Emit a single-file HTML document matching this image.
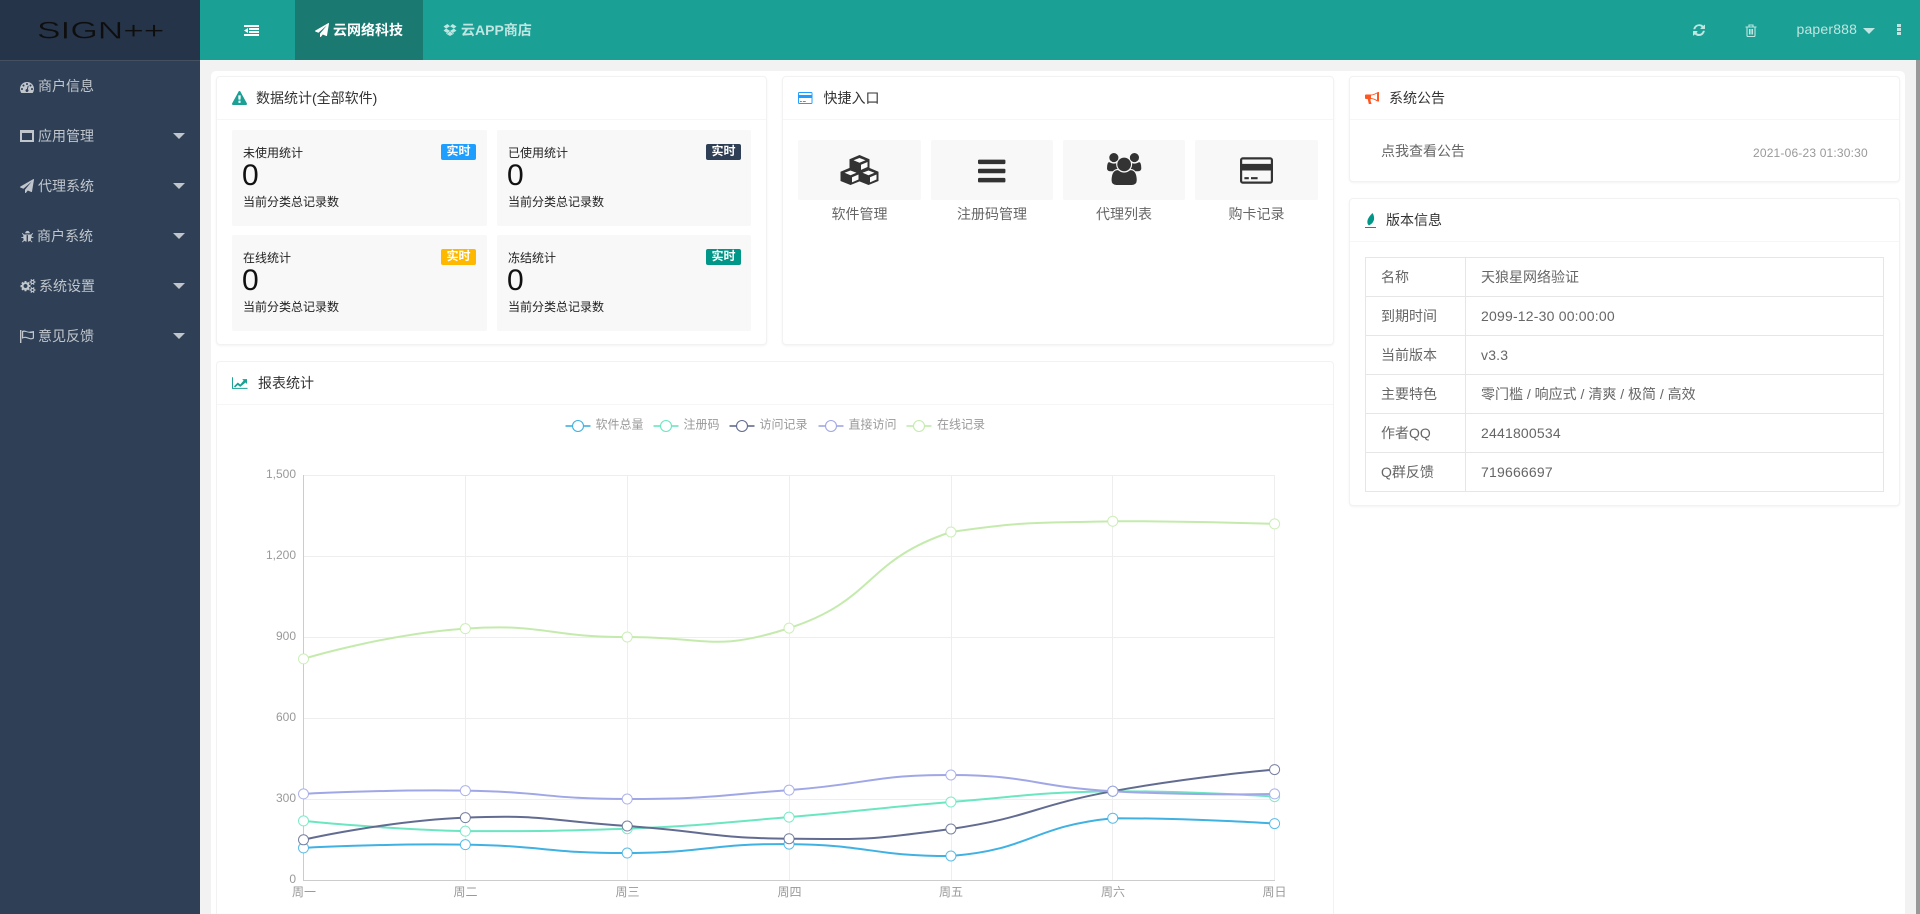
<!DOCTYPE html>
<html lang="zh-CN">
<head>
<meta charset="utf-8">
<title>SIGN++</title>
<style>
*{box-sizing:border-box;margin:0;padding:0}
html,body{width:1920px;height:914px;overflow:hidden;background:#fff;font-family:"Liberation Sans","Noto Sans CJK SC",sans-serif;font-size:14px;color:#666}
#root{position:relative;width:1920px;height:914px;overflow:hidden}
.a{position:absolute}
.t{position:absolute;white-space:nowrap;line-height:20px;height:20px}
svg.i{position:absolute;display:block;overflow:visible}
#side{left:0;top:0;width:200px;height:914px;background:#2f4056}
#logo{left:0;top:0;width:200px;height:61px;background:#263449;border-bottom:1px solid #455160}
#head{left:200px;top:0;width:1720px;height:60px;background:#1aa094}
#tab{left:295px;top:0;width:128px;height:60px;background:#1a7a72}
#bg{left:200px;top:60px;width:1716px;height:854px;background:#f2f2f2}
#wrap{left:211px;top:71px;width:1694px;height:843px;background:#fff;border-radius:5px 5px 0 0}
#sb{left:1916px;top:60px;width:4px;height:854px;background:#999}
.card{position:absolute;background:#fff;border:1px solid #f2f2f2;border-radius:4px;box-shadow:0 1px 2px rgba(0,0,0,.05)}
.hr{position:absolute;height:1px;background:#f6f6f6}
.side{color:#c1c6cd;font-size:14px}
.ttl{color:#333;font-size:14px}
.arr{position:absolute;width:0;height:0;border-left:6px solid transparent;border-right:6px solid transparent;border-top:6px solid #c1c6cd}
.box{position:absolute;background:#f8f8f8;border-radius:2px}
.s1{font-size:12px;color:#222}
.zero{position:absolute;font-size:30px;line-height:34px;color:#111;font-family:"Liberation Sans",sans-serif}
.badge{position:absolute;width:35px;height:16px;border-radius:2px;color:#fff;font-size:12px;font-weight:bold;line-height:15px;text-align:center}
.ql{position:absolute;text-align:center;color:#666;font-size:14px;line-height:20px;white-space:nowrap}
table{position:absolute;left:1365px;top:257px;width:519px;border-collapse:collapse;table-layout:fixed;color:#666;font-size:14px}
td{border:1px solid #e6e6e6;height:39px;padding:0 15px;line-height:20px;white-space:nowrap}
td.n{letter-spacing:.2px}
svg text{font-family:"Liberation Sans","Noto Sans CJK SC",sans-serif}
</style>
</head>
<body>
<div id="root">
<div class="a" id="bg"></div>
<div class="a" id="wrap"></div>
<div class="a" id="sb"></div>
<div class="a" id="head"></div>
<div class="a" id="tab"></div>

<!-- header icons -->
<svg class="i" style="left:244px;top:25px;width:15px;height:11px" viewBox="0 0 15 11" fill="#fff"><rect x="0" y="0" width="15" height="2"/><rect x="5" y="3" width="10" height="2"/><rect x="5" y="6" width="10" height="2"/><rect x="0" y="9" width="15" height="2"/><path d="M0 5.500L4 3v5z"/></svg>
<svg class="i" style="left:315px;top:23px;width:14px;height:14px" viewBox="0 0 1792 1792" fill="#fff"><path d="M1764 11q33 24 27 64l-256 1536q-5 29-32 45-14 8-31 8-11 0-24-5l-453-185-242 295q-18 23-49 23-13 0-22-4-19-7-30.5-23.5t-11.5-36.5v-349l864-1059-1069 925-395-162q-37-14-40-55-2-40 32-59l1664-960q15-9 32-9 20 0 36 11z"/></svg>
<div class="t" style="left:333px;top:20px;color:#fff;font-weight:bold">云网络科技</div>
<svg class="i" style="left:443px;top:23px;width:14px;height:14px" viewBox="0 0 1792 1792" fill="#bfe6e2"><path d="M402 707l494 305-342 285L64 978zM1390 1262v108l-494 295-494-295v-108l152 99 342-284 342 284zM554 128l342 285-494 305L64 446zM1238 128l490 318-338 272-494-305zM1390 718l338 260-490 319-342-285z"/></svg>
<div class="t" style="left:461px;top:20px;color:#bfe6e2;font-weight:bold">云APP商店</div>

<svg class="i" style="left:1692px;top:23px;width:14px;height:14px" viewBox="0 0 1792 1792" fill="#bfe6e2"><path d="M1639 1056q0 5-1 7-64 268-268 434.5T892 1664q-146 0-282.5-55T366 1452l-129 129q-19 19-45 19t-45-19-19-45v-448q0-26 19-45t45-19h448q26 0 45 19t19 45-19 45L592 1274q62 58 143 91t174 33q122 0 228-58.5T1319 1168q16-26 64-144 9-26 33-26h192q13 0 22.5 9.5t9.5 22.5zM1664 256v448q0 26-19 45t-45 19h-448q-26 0-45-19t-19-45 19-45l138-138q-148-137-349-137-122 0-228 58T497 624q-16 26-64 144-9 26-33 26H201q-13 0-22.5-9.5T169 762v-7q65-268 270-434.5T920 154q146 0 284 55.5T1450 366l130-129q19-19 45-19t45 19 19 45z"/></svg>
<svg class="i" style="left:1745px;top:24px;width:12px;height:13px" viewBox="0 0 12 13" fill="none" stroke="#bfe6e2" stroke-width="1.1"><path d="M.5 3h11M4 3V1h4v2M2 3v8.500q0 1 1 1h6q1 0 1-1V3M4.500 5v5.500M6 5v5.500M7.500 5v5.500"/></svg>
<div class="t" style="left:1796.5px;top:19px;color:#bfe6e2;letter-spacing:.18px">paper888</div>
<div class="a" style="left:1862.5px;top:27.5px;width:0;height:0;border-left:6px solid transparent;border-right:6px solid transparent;border-top:6px solid #bfe6e2"></div>
<svg class="i" style="left:1897px;top:24px;width:4px;height:11px" viewBox="0 0 4 11" fill="#bfe6e2"><rect width="4" height="3"/><rect y="4" width="4" height="3"/><rect y="8" width="4" height="3"/></svg>

<!-- sidebar -->
<div class="a" id="side"></div>
<div class="a" id="logo"></div>
<svg class="i" style="left:0;top:0;width:200px;height:60px" viewBox="0 0 200 60"><text transform="translate(37,38.6) scale(1.47,1)" font-size="24" fill="#0e0e0e" stroke="#263449" stroke-width=".35">SIGN++</text></svg>

<svg class="i" style="left:20px;top:79.5px;width:14px;height:14px" viewBox="0 0 1792 1792" fill="#c1c6cd"><path d="M384 1152q0-53-37.5-90.5T256 1024t-90.5 37.5T128 1152t37.5 90.5T256 1280t90.5-37.5T384 1152zm192-448q0-53-37.5-90.5T448 576t-90.5 37.5T320 704t37.5 90.5T448 832t90.5-37.5T576 704zm428 481l101-382q6-26-7.5-48.5T1059 724t-48 6.5-30 39.5l-101 382q-60 5-107 43.5t-63 98.5q-20 77 20 146t117 89 146-20 89-117q16-60-6-117t-72-91zm660-33q0-53-37.5-90.5T1536 1024t-90.5 37.5-37.5 90.5 37.5 90.5 90.5 37.5 90.5-37.5 37.5-90.5zm-640-640q0-53-37.5-90.5T896 384t-90.5 37.5T768 512t37.5 90.5T896 640t90.5-37.5T1024 512zm448 192q0-53-37.5-90.5T1344 576t-90.5 37.5T1216 704t37.5 90.5 90.5 37.5 90.5-37.5T1472 704zm320 448q0 261-141 483-19 29-54 29H195q-35 0-54-29Q0 1414 0 1152q0-182 71-348t191-286 286-191 348-71 348 71 286 191 191 286 71 348z"/></svg>
<div class="t side" style="left:38px;top:76px">商户信息</div>

<svg class="i" style="left:20px;top:130px;width:14px;height:12px" viewBox="0 0 14 12" fill="#c1c6cd"><path fill-rule="evenodd" d="M0 0h14v12H0zM2 3v7h10V3z"/></svg>
<div class="t side" style="left:38px;top:126px">应用管理</div>
<div class="arr" style="left:173px;top:133px"></div>

<svg class="i" style="left:20px;top:178.5px;width:14px;height:14px" viewBox="0 0 1792 1792" fill="#c1c6cd"><path d="M1764 11q33 24 27 64l-256 1536q-5 29-32 45-14 8-31 8-11 0-24-5l-453-185-242 295q-18 23-49 23-13 0-22-4-19-7-30.5-23.5t-11.5-36.5v-349l864-1059-1069 925-395-162q-37-14-40-55-2-40 32-59l1664-960q15-9 32-9 20 0 36 11z"/></svg>
<div class="t side" style="left:38px;top:176px">代理系统</div>
<div class="arr" style="left:173px;top:183px"></div>

<svg class="i" style="left:20.5px;top:229.5px;width:13px;height:13px" viewBox="0 0 1792 1792" fill="#c1c6cd"><path d="M1696 1024q0 26-19 45t-45 19h-224q0 171-67 290l208 209q19 19 19 45t-19 45q-18 19-45 19t-45-19l-198-197q-5 5-15 13t-42 28.5-65 36.5-82 29-97 13V704H768v896q-51 0-101.5-13.5t-87-33-66-39T469 1482l-16-15-183 207q-20 21-48 21-24 0-43-16-19-18-20.5-44.5T174 1588l202-227q-58-114-58-274H94q-26 0-45-19t-19-45 19-45 45-19h224V710L145 537q-19-19-19-45t19-45 45-19 45 19l173 173h976l173-173q19-19 45-19t45 19 19 45-19 45l-173 173v249h224q26 0 45 19t19 45zM1216 448H576q0-133 93.5-226.5T896 128t226.5 93.5T1216 448z"/></svg>
<div class="t side" style="left:37px;top:226px">商户系统</div>
<div class="arr" style="left:173px;top:233px"></div>

<svg class="i" style="left:19.5px;top:278.500px;width:16px;height:14px" viewBox="0 0 2048 1792" fill="#c1c6cd"><path d="M960 896q0-106-75-181t-181-75-181 75-75 181 75 181 181 75 181-75 75-181zm768 512q0-52-38-90t-90-38-90 38-38 90q0 53 37.5 90.5T1600 1536t90.5-37.5 37.5-90.5zm0-1024q0-52-38-90t-90-38-90 38-38 90q0 53 37.5 90.5T1600 512t90.5-37.5T1728 384zm-384 421v185q0 10-7 19.5t-16 10.5l-155 24q-11 35-32 76 34 48 90 115 7 11 7 20 0 12-7 19-23 30-82.5 89.5T1063 1458q-11 0-21-7l-115-90q-37 19-77 31-11 108-23 155-7 24-30 24H611q-11 0-20-7.5T581 1546l-23-153q-34-10-75-31l-118 89q-7 7-20 7-11 0-21-8-144-133-144-160 0-9 7-19 10-14 41-53t47-61q-23-44-35-82l-152-24q-10-1-17-9.5T64 993V808q0-10 7-19.5t16-10.5l155-24q11-35 32-76-34-48-90-115-7-11-7-20 0-12 7-20 22-30 82-89t79-59q11 0 21 7l115 90q34-18 77-32 11-108 23-154 7-24 30-24h186q11 0 20 7.5t10 17.5l23 153q34 10 75 31l118-89q8-7 20-7 11 0 21 8 144 133 144 160 0 8-7 19-12 16-42 54t-45 60q23 48 34 82l152 23q10 2 17 10.5t7 19.5zm640 533v140q0 16-149 31-12 27-30 52 51 113 51 138 0 4-4 7-122 71-124 71-8 0-46-47t-52-68q-20 2-30 2t-30-2q-14 21-52 68t-46 47q-2 0-124-71-4-3-4-7 0-25 51-138-18-25-30-52-149-15-149-31v-140q0-16 149-31 13-29 30-52-51-113-51-138 0-4 4-7 4-2 35-20t59-34 30-16q8 0 46 46.5t52 67.5q20-2 30-2t30 2q51-71 92-112l6-2q4 0 124 70 4 3 4 7 0 25-51 138 17 23 30 52 149 15 149 31zm0-1024v140q0 16-149 31-12 27-30 52 51 113 51 138 0 4-4 7-122 71-124 71-8 0-46-47t-52-68q-20 2-30 2t-30-2q-14 21-52 68t-46 47q-2 0-124-71-4-3-4-7 0-25 51-138-18-25-30-52-149-15-149-31V314q0-16 149-31 13-29 30-52-51-113-51-138 0-4 4-7 4-2 35-20t59-34 30-16q8 0 46 46.5t52 67.5q20-2 30-2t30 2q51-71 92-112l6-2q4 0 124 70 4 3 4 7 0 25-51 138 17 23 30 52 149 15 149 31z"/></svg>
<div class="t side" style="left:39px;top:276px">系统设置</div>
<div class="arr" style="left:173px;top:283px"></div>

<svg class="i" style="left:20px;top:330px;width:14px;height:13px" viewBox="0 0 14 13" fill="#c1c6cd"><path d="M0 0h1.400v13H0z"/><path fill-rule="evenodd" d="M2 1q2-1 4 0t4 .6L14 1v7.400q-2 1.400-4 .8T6 8q-2-.4-4 .8zM3.200 2v5.200q1.600-.6 3-.3t4 1.200q1.300.3 2.600-.3V2.800q-1.500.4-3 .1T6 2q-1.500-.4-2.800 0z"/></svg>
<div class="t side" style="left:38px;top:326px">意见反馈</div>
<div class="arr" style="left:173px;top:333px"></div>

<!-- card 1 -->
<div class="card" style="left:216px;top:76px;width:551px;height:269px"></div>
<div class="hr" style="left:217px;top:119px;width:549px"></div>
<svg class="i" style="left:232px;top:91px;width:15px;height:14px" viewBox="0 0 1792 1664" fill="#1aa094"><path d="M1024 1375v-190q0-14-9.500-23.500T992 1152H800q-13 0-22.500 9.500T768 1185v190q0 14 9.500 23.500t22.500 9.500h192q13 0 22.500-9.500t9.500-23.500zm-2-374l18-459q0-12-10-19-13-11-24-11H786q-11 0-24 11-10 7-10 21l17 457q0 10 10 16.500t24 6.500h185q14 0 23.500-6.500t10.500-16.500zm-14-934l768 1408q35 63-2 126-17 29-46.500 46t-63.500 17H128q-34 0-63.500-17T18 1601q-37-63-2-126L784 67q17-31 47-49t65-18 65 18 47 49z"/></svg>
<div class="t ttl" style="left:256px;top:88px">数据统计(全部软件)</div>

<div class="box" style="left:232px;top:130px;width:255px;height:96px"></div>
<div class="t s1" style="left:243px;top:142.500px">未使用统计</div>
<div class="zero" style="left:242px;top:159px">0</div>
<div class="t s1" style="left:243px;top:191.500px">当前分类总记录数</div>
<div class="badge" style="left:441px;top:144px;background:#1e9fff">实时</div>

<div class="box" style="left:497px;top:130px;width:254px;height:96px"></div>
<div class="t s1" style="left:508px;top:142.500px">已使用统计</div>
<div class="zero" style="left:507px;top:159px">0</div>
<div class="t s1" style="left:508px;top:191.500px">当前分类总记录数</div>
<div class="badge" style="left:706px;top:144px;background:#2f4056">实时</div>

<div class="box" style="left:232px;top:235px;width:255px;height:96px"></div>
<div class="t s1" style="left:243px;top:247.500px">在线统计</div>
<div class="zero" style="left:242px;top:264px">0</div>
<div class="t s1" style="left:243px;top:296.500px">当前分类总记录数</div>
<div class="badge" style="left:441px;top:249px;background:#ffb800">实时</div>

<div class="box" style="left:497px;top:235px;width:254px;height:96px"></div>
<div class="t s1" style="left:508px;top:247.500px">冻结统计</div>
<div class="zero" style="left:507px;top:264px">0</div>
<div class="t s1" style="left:508px;top:296.500px">当前分类总记录数</div>
<div class="badge" style="left:706px;top:249px;background:#009688">实时</div>

<!-- card 2 -->
<div class="card" style="left:782px;top:76px;width:552px;height:269px"></div>
<div class="hr" style="left:783px;top:119px;width:550px"></div>
<svg class="i" style="left:798px;top:92px;width:14.500px;height:12px" viewBox="0 0 1920 1536" preserveAspectRatio="none" fill="#1e9fff"><path d="M1760 0q66 0 113 47t47 113v1216q0 66-47 113t-113 47H160q-66 0-113-47T0 1376V160q0-66 47-113T160 0h1600zM128 128v256h1664V128H128zM1792 768H128v640h1664V768zM256 1280v-128h256v128H256zm384 0v-128h384v128H640z"/></svg>
<div class="t ttl" style="left:823.500px;top:88px">快捷入口</div>

<div class="box" style="left:798px;top:140px;width:123px;height:60px"></div>
<div class="box" style="left:931px;top:140px;width:122px;height:60px"></div>
<div class="box" style="left:1063px;top:140px;width:122px;height:60px"></div>
<div class="box" style="left:1195px;top:140px;width:123px;height:60px"></div>

<svg class="i" style="left:840.500px;top:155px;width:37px;height:30px" viewBox="0 0 37 30">
<g><path fill="#333" d="M18.500 0L28.500 4.200V13.500L18.500 17.500L8.500 13.500V4.200Z"/><path fill="#fbfbfb" d="M18.500 3L24.500 5.300L18.500 7.700L12.500 5.300ZM20 9.800L26.500 7V12L20 14.900Z"/></g>
<g transform="translate(-9 12.500)"><path fill="#333" d="M18.500 0L28.500 4.200V13.500L18.500 17.500L8.500 13.500V4.200Z"/><path fill="#fbfbfb" d="M18.500 3L24.500 5.300L18.500 7.700L12.500 5.300ZM20 9.800L26.500 7V12L20 14.900Z"/></g>
<g transform="translate(9 12.500)"><path fill="#333" d="M18.500 0L28.500 4.200V13.500L18.500 17.500L8.500 13.500V4.200Z"/><path fill="#fbfbfb" d="M18.500 3L24.500 5.300L18.500 7.700L12.500 5.300ZM20 9.800L26.500 7V12L20 14.900Z"/></g>
</svg>
<svg class="i" style="left:978.300px;top:154.700px;width:27.430px;height:32px" viewBox="0 0 1536 1792" fill="#333"><path d="M1536 1344v128q0 26-19 45t-45 19H64q-26 0-45-19t-19-45v-128q0-26 19-45t45-19h1408q26 0 45 19t19 45zm0-512v128q0 26-19 45t-45 19H64q-26 0-45-19t-19-45V832q0-26 19-45t45-19h1408q26 0 45 19t19 45zm0-512v128q0 26-19 45t-45 19H64q-26 0-45-19t-19-45V320q0-26 19-45t45-19h1408q26 0 45 19t19 45z"/></svg>
<svg class="i" style="left:1107px;top:153px;width:34.300px;height:32px" viewBox="0 0 1920 1792" fill="#333"><path d="M593 896q-162 5-265 128h-134q-82 0-138-40.500t-56-118.500q0-353 124-353 6 0 43.500 21t97.500 42.500 119 21.500q67 0 133-23-5 37-5 66 0 139 81 256zm1071 637q0 120-73 189.500t-194 69.500h-874q-121 0-194-69.500t-73-189.500q0-53 3.500-103.500t14-109 26.500-108.500 43-97.500 62-81 85.500-53.500 111.500-20q10 0 43 21.500t73 48 107 48 135 21.500 135-21.500 107-48 73-48 43-21.500q61 0 111.500 20t85.500 53.500 62 81 43 97.500 26.500 108.500 14 109 3.500 103.500zm-1024-1277q0 106-75 181t-181 75-181-75-75-181 75-181 181-75 181 75 75 181zm704 384q0 159-112.500 271.500t-271.500 112.500-271.500-112.500-112.500-271.500 112.500-271.500 271.500-112.500 271.500 112.500 112.500 271.500zm576 225q0 78-56 118.500t-138 40.500h-134q-103-123-265-128 81-117 81-256 0-29-5-66 66 23 133 23 59 0 119-21.500t97.500-42.500 43.500-21q124 0 124 353zm-128-609q0 106-75 181t-181 75-181-75-75-181 75-181 181-75 181 75 75 181z"/></svg>
<svg class="i" style="left:1240px;top:155px;width:33px;height:31px" viewBox="0 0 1920 1792" fill="#333"><path d="M1760 128q66 0 113 47t47 113v1216q0 66-47 113t-113 47H160q-66 0-113-47T0 1504V288q0-66 47-113t113-47h1600zM160 256q-13 0-22.500 9.500T128 288v224h1664V288q0-13-9.500-22.500T1760 256H160zm1600 1280q13 0 22.500-9.500t9.500-22.500V896H128v608q0 13 9.500 22.500t22.500 9.500h1600zM256 1408v-128h256v128H256zm384 0v-128h384v128H640z"/></svg>

<div class="ql" style="left:798px;top:204px;width:123px">软件管理</div>
<div class="ql" style="left:931px;top:204px;width:122px">注册码管理</div>
<div class="ql" style="left:1063px;top:204px;width:122px">代理列表</div>
<div class="ql" style="left:1195px;top:204px;width:123px">购卡记录</div>

<!-- card 3 -->
<div class="card" style="left:1349px;top:76px;width:551px;height:106px"></div>
<div class="hr" style="left:1350px;top:119px;width:549px"></div>
<svg class="i" style="left:1365px;top:92px;width:14px;height:12px" viewBox="0 0 14 12" fill="#ff5722"><path fill-rule="evenodd" d="M13 0h1v9.500h-1L11.500 9Q8.500 7 6 7H5.500v1.500L6.500 12H3.800L2.700 7H1Q0 7 0 6V3.500Q0 2.500 1 2.500H6Q8.500 2.500 11.500 .7zM6 3.500V6Q9 6.300 12 8V1.500Q9 3.300 6 3.500z"/></svg>
<div class="t ttl" style="left:1389px;top:88px">系统公告</div>
<div class="t" style="left:1381px;top:141px;color:#666">点我查看公告</div>
<div class="t" style="left:1753px;top:143px;font-size:12px;color:#999;letter-spacing:.18px">2021-06-23 01:30:30</div>

<!-- card 4 -->
<div class="card" style="left:1349px;top:198px;width:551px;height:308px"></div>
<div class="hr" style="left:1350px;top:241px;width:549px"></div>
<svg class="i" style="left:1365px;top:213px;width:11px;height:15px" viewBox="0 0 11 15" fill="#009688"><path d="M7.500 0Q9.500 3 9 6.500T4 12.500Q1.800 10.800 2.500 7.500T7.500 0z"/><rect x="0" y="14" width="11" height="1"/></svg>
<div class="t ttl" style="left:1386px;top:210px">版本信息</div>
<table>
<colgroup><col style="width:100px"><col></colgroup>
<tr><td>名称</td><td>天狼星网络验证</td></tr>
<tr><td>到期时间</td><td class="n">2099-12-30 00:00:00</td></tr>
<tr><td>当前版本</td><td class="n">v3.3</td></tr>
<tr><td>主要特色</td><td>零门槛 / 响应式 / 清爽 / 极简 / 高效</td></tr>
<tr><td>作者QQ</td><td class="n">2441800534</td></tr>
<tr><td>Q群反馈</td><td class="n">719666697</td></tr>
</table>

<!-- card 5 -->
<div class="card" style="left:216px;top:361px;width:1118px;height:553px;border-bottom:0;border-radius:4px 4px 0 0;box-shadow:none"></div>
<div class="hr" style="left:217px;top:404px;width:1116px"></div>
<svg class="i" style="left:232px;top:377px;width:15.500px;height:12px" viewBox="0 0 16 12" fill="#1aa094"><path d="M0 0h1v11h15v1H0z"/><path d="M2 9.500L6 5.500l2.500 2L12 3.500 10.500 2H15.500V7L14 5.500 8.500 10 6 8 3.200 10.700z"/></svg>
<div class="t ttl" style="left:258px;top:373px">报表统计</div>

<!-- chart -->
<svg class="a" style="left:0;top:0" width="1920" height="914" viewBox="0 0 1920 914">
<g stroke="#eeeeee" stroke-width="1" fill="none" shape-rendering="crispEdges">
<path d="M303.500 475.500H1274.500M303.500 556.500H1274.500M303.500 637.500H1274.500M303.500 718.500H1274.500M303.500 799.500H1274.500"/>
<path d="M465.500 475V880M627.500 475V880M789.500 475V880M951.500 475V880M1112.500 475V880M1274.500 475V880"/>
</g>
<g stroke="#cccccc" stroke-width="1" fill="none" shape-rendering="crispEdges"><path d="M303.500 475V881M303 880.500H1275"/></g>

<g font-size="12" fill="#999999" text-anchor="end">
<text x="296" y="478">1,500</text>
<text x="296" y="559">1,200</text>
<text x="296" y="640">900</text>
<text x="296" y="721">600</text>
<text x="296" y="802">300</text>
<text x="296" y="883">0</text>
</g>
<g font-size="12" fill="#999999" text-anchor="middle">
<text x="304" y="896">周一</text>
<text x="465.500" y="896">周二</text>
<text x="627.500" y="896">周三</text>
<text x="789.500" y="896">周四</text>
<text x="951" y="896">周五</text>
<text x="1113" y="896">周六</text>
<text x="1274.500" y="896">周日</text>
</g>

<!-- legend -->
<g stroke-width="2" opacity=".8">
<path d="M565.500 426H590.500" stroke="#3fb1e3"/><path d="M653.500 426H678.500" stroke="#6be6c1"/><path d="M729.500 426H754.500" stroke="#626c91"/><path d="M818.500 426H843.500" stroke="#a0a7e6"/><path d="M906.500 426H931.500" stroke="#c4ebad"/>
</g>
<g fill="#fff" stroke-width="1.100">
<circle cx="578" cy="426" r="5.500" stroke="#3fb1e3"/><circle cx="666" cy="426" r="5.500" stroke="#6be6c1"/><circle cx="742" cy="426" r="5.500" stroke="#626c91"/><circle cx="831" cy="426" r="5.500" stroke="#a0a7e6"/><circle cx="919" cy="426" r="5.500" stroke="#c4ebad"/>
</g>
<g font-size="12" fill="#999999">
<text x="595.500" y="428.500">软件总量</text>
<text x="683.500" y="428.500">注册码</text>
<text x="759.500" y="428.500">访问记录</text>
<text x="848.500" y="428.500">直接访问</text>
<text x="937" y="428.500">在线记录</text>
</g>

<!-- series -->
<g stroke="#3fb1e3">
<path fill="none" stroke-width="2" d="M303.500 847.900C303.500 847.900 384.420 843.380 465.350 844.660C546.280 845.940 546.270 853.170 627.200 853.030C708.130 852.900 708.120 843.380 789.050 844.120C869.980 844.860 869.970 856 950.900 856C1031.830 849.520 1031.820 826.300 1112.750 818.200C1193.680 818.200 1274.600 823.600 1274.600 823.600"/>
<g fill="#fff" stroke-width="1" stroke-opacity=".85"><circle cx="303.500" cy="847.900" r="5"/><circle cx="465.350" cy="844.660" r="5"/><circle cx="627.200" cy="853.030" r="5"/><circle cx="789.050" cy="844.120" r="5"/><circle cx="950.900" cy="856" r="5"/><circle cx="1112.750" cy="818.200" r="5"/><circle cx="1274.600" cy="823.600" r="5"/></g>
</g>
<g stroke="#6be6c1">
<path fill="none" stroke-width="2" d="M303.500 820.900C303.500 820.900 384.420 829.200 465.350 831.160C546.280 831.160 546.270 831.160 627.200 828.730C708.130 825.220 708.120 823.800 789.050 817.120C869.980 810.440 869.970 808.480 950.900 802C1031.830 795.520 1031.820 792.550 1112.750 791.200C1193.680 791.200 1274.600 796.600 1274.600 796.600"/>
<g fill="#fff" stroke-width="1" stroke-opacity=".85"><circle cx="303.500" cy="820.900" r="5"/><circle cx="465.350" cy="831.160" r="5"/><circle cx="627.200" cy="828.730" r="5"/><circle cx="789.050" cy="817.120" r="5"/><circle cx="950.900" cy="802" r="5"/><circle cx="1112.750" cy="791.200" r="5"/><circle cx="1274.600" cy="796.600" r="5"/></g>
</g>
<g stroke="#626c91">
<path fill="none" stroke-width="2" d="M303.500 839.800C303.500 839.800 384.420 821.100 465.350 817.660C546.280 814.220 546.270 820.760 627.200 826.030C708.130 831.300 708.120 837.980 789.050 838.720C869.980 839.460 869.970 839.800 950.900 829C1031.830 817.120 1031.820 806.050 1112.750 791.200C1193.680 776.350 1274.600 769.600 1274.600 769.600"/>
<g fill="#fff" stroke-width="1" stroke-opacity=".85"><circle cx="303.500" cy="839.800" r="5"/><circle cx="465.350" cy="817.660" r="5"/><circle cx="627.200" cy="826.030" r="5"/><circle cx="789.050" cy="838.720" r="5"/><circle cx="950.900" cy="829" r="5"/><circle cx="1112.750" cy="791.200" r="5"/><circle cx="1274.600" cy="769.600" r="5"/></g>
</g>
<g stroke="#a0a7e6">
<path fill="none" stroke-width="2" d="M303.500 793.900C303.500 793.900 384.420 789.380 465.350 790.660C546.280 791.940 546.270 799.030 627.200 799.030C708.130 798.900 708.120 796.130 789.050 790.120C869.980 784.110 869.970 775 950.900 775C1031.830 775.270 1031.820 786.470 1112.750 791.200C1193.680 795.930 1274.600 793.900 1274.600 793.900"/>
<g fill="#fff" stroke-width="1" stroke-opacity=".85"><circle cx="303.500" cy="793.900" r="5"/><circle cx="465.350" cy="790.660" r="5"/><circle cx="627.200" cy="799.030" r="5"/><circle cx="789.050" cy="790.120" r="5"/><circle cx="950.900" cy="775" r="5"/><circle cx="1112.750" cy="791.200" r="5"/><circle cx="1274.600" cy="793.900" r="5"/></g>
</g>
<g stroke="#c4ebad">
<path fill="none" stroke-width="2" d="M303.500 658.900C303.500 658.900 383.780 634.170 465.350 628.660C545.630 623.240 546.270 637.170 627.200 637.030C708.130 636.900 714.110 652.430 789.050 628.120C875.960 599.920 863.970 560.720 950.900 532C1025.810 521.200 1031.780 523.230 1112.750 521.200C1193.660 521.200 1274.600 523.900 1274.600 523.900"/>
<g fill="#fff" stroke-width="1" stroke-opacity=".85"><circle cx="303.500" cy="658.900" r="5"/><circle cx="465.350" cy="628.660" r="5"/><circle cx="627.200" cy="637.030" r="5"/><circle cx="789.050" cy="628.120" r="5"/><circle cx="950.900" cy="532" r="5"/><circle cx="1112.750" cy="521.200" r="5"/><circle cx="1274.600" cy="523.900" r="5"/></g>
</g>
</svg>
</div>
</body>
</html>
